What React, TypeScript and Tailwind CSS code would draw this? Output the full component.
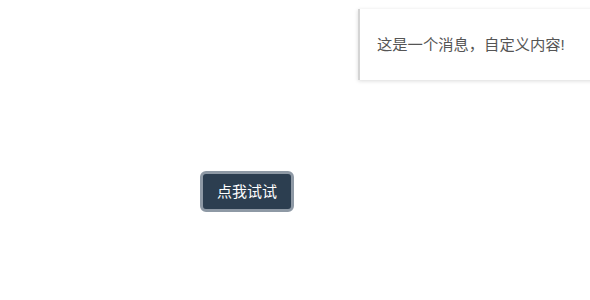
import React from 'react';

const App: React.FC = () => {
  return (
    <div className="relative w-[590px] h-[300px] bg-white overflow-hidden font-['Liberation_Sans','Noto_Sans_CJK_SC',sans-serif]">
      {/* Notification */}
      <div className="absolute top-[9px] left-[358px] w-[240px] h-[71px] bg-white border-l-2 border-[#d4d4d4] shadow-[0_1px_4px_rgba(0,0,0,0.15)] flex items-center pl-[17px] pt-[1px]">
        <span className="text-[15.3px] text-[#555]">这是一个消息，自定义内容!</span>
      </div>

      <div className="pt-[171px] pl-[200px]">
        <button className="h-[41px] px-[14px] rounded-[6px] border-[3px] border-[#8e99a5] bg-[#2c3e50] text-white text-[15px] leading-none">
          点我试试
        </button>
      </div>
    </div>
  );
};

export default App;
